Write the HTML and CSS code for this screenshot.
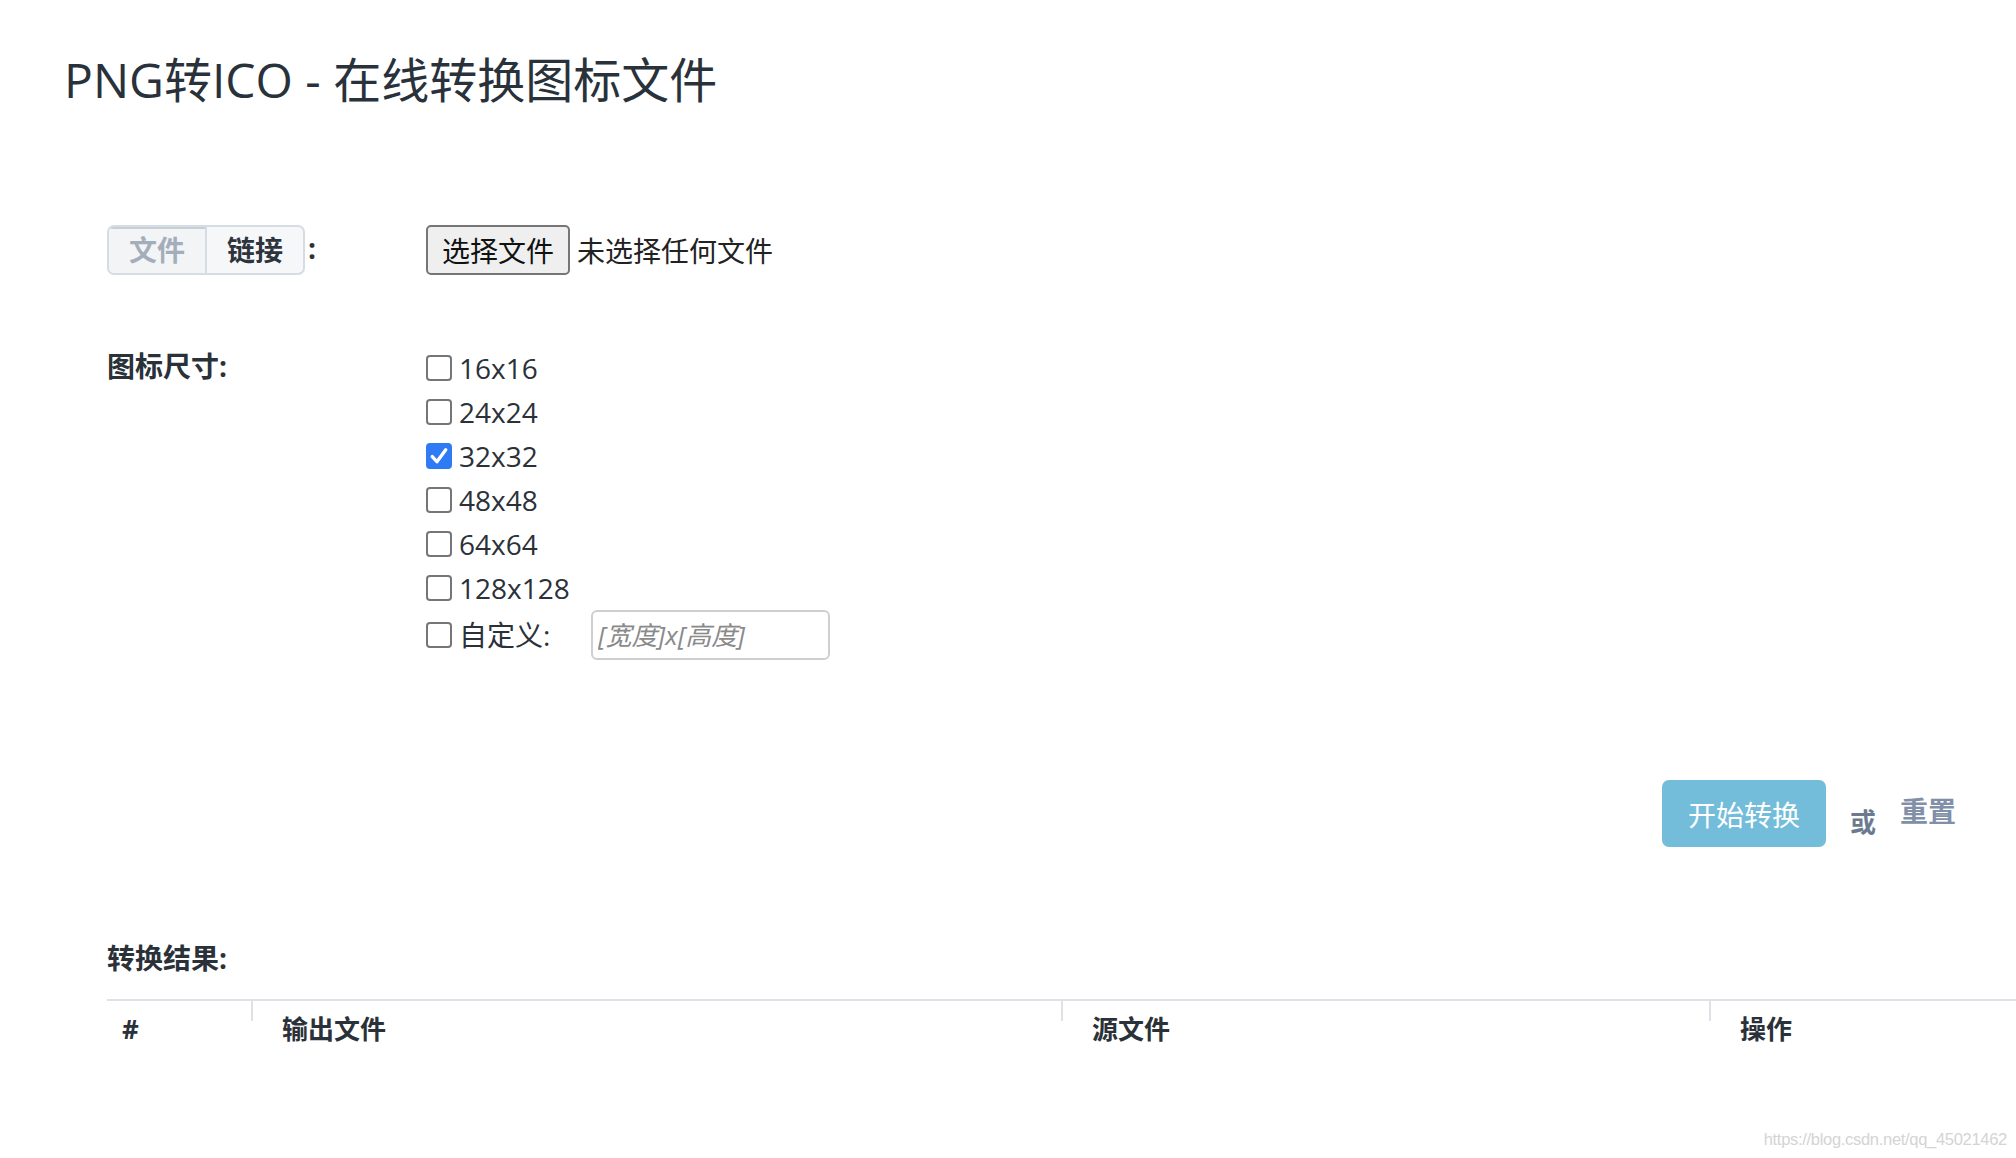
FILE: index.html
```html
<!DOCTYPE html>
<html lang="zh-CN">
<head>
<meta charset="utf-8">
<title>PNG转ICO - 在线转换图标文件</title>
<link rel="stylesheet" href="styles.css">
</head>
<body>
<div class="page">
  <h1 class="title">PNG转ICO - 在线转换图标文件</h1>
  <div class="form">
    <div class="row row-source">
      <div class="label-col">
        <div class="tabs">
          <span class="tab tab-active">文件</span>
          <span class="tab">链接</span>
        </div>
        <span class="colon">:</span>
      </div>
      <div class="field-col file-field">
        <span class="file-btn">选择文件</span>
        <span class="file-name">未选择任何文件</span>
      </div>
    </div>
    <div class="row row-sizes">
      <div class="label-col"><span class="label">图标尺寸:</span></div>
      <div class="field-col sizes">
        <label class="check"><span class="box"></span><span>16x16</span></label>
        <label class="check"><span class="box"></span><span>24x24</span></label>
        <label class="check"><span class="box box-on"><svg viewBox="0 0 25 25" width="25" height="25"><path d="M6 13 L10.5 18 L19 6.5" fill="none" stroke="#fff" stroke-width="3.2" stroke-linecap="round" stroke-linejoin="round"/></svg></span><span>32x32</span></label>
        <label class="check"><span class="box"></span><span>48x48</span></label>
        <label class="check"><span class="box"></span><span>64x64</span></label>
        <label class="check"><span class="box"></span><span>128x128</span></label>
        <div class="check check-custom"><span class="box"></span><span class="custom-label">自定义:</span><input class="custom-input" type="text" placeholder="[宽度]x[高度]"></div>
      </div>
    </div>
    <div class="actions">
      <span class="btn-start">开始转换</span>
      <span class="or">或</span>
      <span class="reset">重置</span>
    </div>
    <div class="result-label">转换结果:</div>
    <div class="table">
      <div class="th th-num">#</div>
      <div class="th th-out">输出文件</div>
      <div class="th th-src">源文件</div>
      <div class="th th-op">操作</div>
    </div>
  </div>
</div>
<div class="watermark">https://blog.csdn.net/qq_45021462</div>
</body>
</html>
```
FILE: styles.css
```css
html, body {
  margin: 0;
  padding: 0;
  background: #ffffff;
}
body {
  font-family: "Open Sans", "Noto Sans CJK SC", sans-serif;
  color: #2b3139;
  font-size: 28px;
  overflow: hidden;
}
.page {
  padding: 51px 0 0 64px;
}
.title {
  margin: 0;
  font-size: 48px;
  line-height: 58px;
  font-weight: 400;
  color: #29313b;
}
.form {
  margin-top: 116px;
  padding-left: 43px;
}
.row {
  display: flex;
}
.label-col {
  width: 319px;
  flex: none;
  display: flex;
  align-items: flex-start;
}
.row-source {
  height: 50px;
  align-items: center;
}
.row-source .label-col {
  align-items: center;
}
.tabs {
  display: flex;
  height: 50px;
  box-sizing: border-box;
  border: 2px solid #d6dce4;
  border-radius: 7px;
  overflow: hidden;
  background: #f6f7f9;
}
.tab {
  width: 96px;
  display: flex;
  align-items: center;
  justify-content: center;
  font-weight: 700;
  font-size: 28px;
  color: #2e343c;
  line-height: 1;
}
.tab-active {
  color: #a4adba;
  background: #f3f4f6;
  border-right: 2px solid #d6dce4;
  box-shadow: inset 0 2px 0 #c9cfd7;
}
.colon {
  margin-left: 3px;
  font-weight: 700;
  line-height: 1;
  position: relative;
  top: -2px;
}
.file-field {
  display: flex;
  align-items: center;
}
.file-btn {
  box-sizing: border-box;
  height: 50px;
  width: 144px;
  border: 2px solid #767676;
  border-radius: 5px;
  background: #efefef;
  color: #111;
  display: flex;
  align-items: center;
  justify-content: center;
  font-size: 28px;
}
.file-name {
  margin-left: 7px;
  color: #222;
}
.row-sizes {
  margin-top: 71px;
}
.label {
  font-weight: 700;
  line-height: 40px;
  color: #2b3139;
}
.sizes {
  display: flex;
  flex-direction: column;
}
.check {
  display: flex;
  align-items: center;
  height: 44px;
  line-height: 44px;
  color: #2b3139;
}
.box {
  box-sizing: border-box;
  width: 26px;
  height: 26px;
  border: 2px solid #767676;
  border-radius: 4px;
  background: #fff;
  margin-right: 7px;
  flex: none;
  display: block;
}
.box svg {
  display: block;
  margin: -2px;
  width: 26px;
  height: 26px;
}
.box-on {
  background: #2f7bf5;
  border-color: #2f7bf5;
}
.check-custom {
  height: 50px;
}
.custom-label {
  width: 132px;
}
.custom-input {
  box-sizing: border-box;
  width: 239px;
  height: 50px;
  border: 2px solid #cfcfcf;
  border-radius: 6px;
  padding: 0 5px;
  font-family: "Open Sans", "Noto Sans CJK SC", sans-serif;
  font-size: 26px;
  font-style: italic;
  outline: none;
}
.custom-input::placeholder {
  color: #8a8a8a;
  font-style: italic;
}
.actions {
  margin-top: 120px;
  display: flex;
  justify-content: flex-end;
  align-items: flex-start;
  padding-right: 60px;
}
.btn-start {
  width: 164px;
  height: 67px;
  border-radius: 7px;
  background: #73bddb;
  color: #fff;
  display: flex;
  align-items: center;
  justify-content: center;
  font-size: 28px;
}
.or {
  margin: 0 24px;
  margin-top: 22px;
  font-size: 26px;
  font-weight: 700;
  line-height: 40px;
  color: #6c7a90;
}
.reset {
  margin-top: 11px;
  font-size: 28px;
  font-weight: 700;
  line-height: 40px;
  color: #8190a8;
}
.result-label {
  margin-top: 91px;
  font-weight: 700;
  line-height: 40px;
  color: #2b3139;
}
.table {
  margin-top: 21px;
  display: grid;
  grid-template-columns: 144px 810px 648px 1fr;
  border-top: 2px solid #dee2e6;
}
.th {
  position: relative;
  padding: 8px 0 0 31px;
  line-height: 40px;
  font-size: 26px;
  font-weight: 700;
  color: #2b3139;
}
.th-num {
  padding-left: 15px;
}
.th-out::before,
.th-src::before,
.th-op::before {
  content: "";
  position: absolute;
  left: 0;
  top: 0;
  width: 2px;
  height: 20px;
  background: #dee2e6;
}
.watermark {
  position: absolute;
  right: 9px;
  top: 1130px;
  font-family: "Liberation Sans", sans-serif;
  font-size: 16.5px;
  letter-spacing: -0.3px;
  color: #d4d4d4;
}
```
